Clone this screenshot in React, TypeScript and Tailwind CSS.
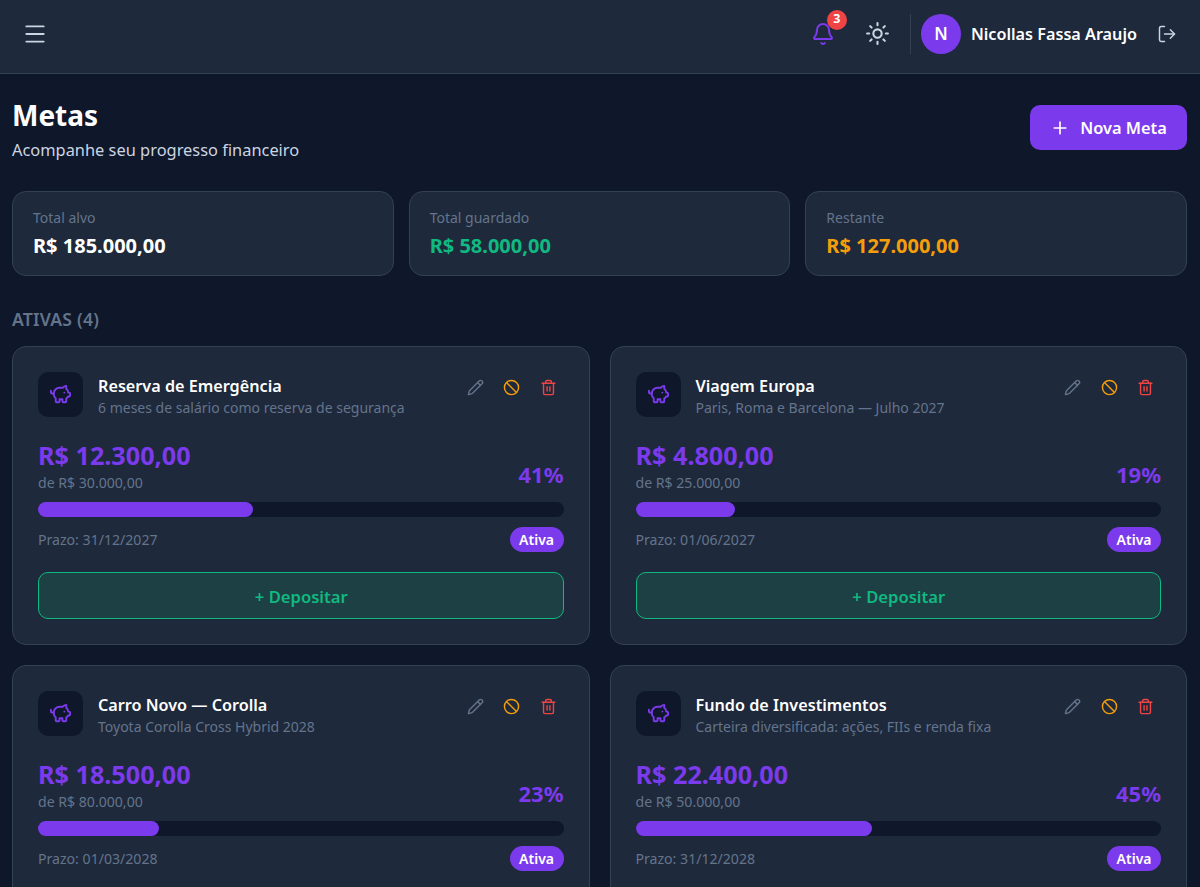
import { Menu, Bell, Sun, LogOut, Plus, Pencil, Ban, Trash2, PiggyBank } from 'lucide-react';

const goals = [
  { name: 'Reserva de Emergência', desc: '6 meses de salário como reserva de segurança', saved: 'R$ 12.300,00', target: 'de R$ 30.000,00', pct: 41, due: '31/12/2027' },
  { name: 'Viagem Europa', desc: 'Paris, Roma e Barcelona — Julho 2027', saved: 'R$ 4.800,00', target: 'de R$ 25.000,00', pct: 19, due: '01/06/2027' },
  { name: 'Carro Novo — Corolla', desc: 'Toyota Corolla Cross Hybrid 2028', saved: 'R$ 18.500,00', target: 'de R$ 80.000,00', pct: 23, due: '01/03/2028' },
  { name: 'Fundo de Investimentos', desc: 'Carteira diversificada: ações, FIIs e renda fixa', saved: 'R$ 22.400,00', target: 'de R$ 50.000,00', pct: 45, due: '31/12/2028' },
];

function GoalCard({ goal }: { goal: (typeof goals)[number] }) {
  return (
    <div className="rounded-[14px] border border-[#334155] bg-[#1e293b] p-[25px]">
      <div className="flex items-start justify-between">
        <div className="flex gap-[15px]">
          <div className="flex h-[45px] w-[45px] items-center justify-center rounded-[10px] bg-[#0f172a]">
            <PiggyBank className="h-[23px] w-[23px] text-[#7c3aed]" strokeWidth={2} />
          </div>
          <div>
            <div className="mt-[2px] text-[16.2px] leading-[24px] font-semibold text-white">{goal.name}</div>
            <div className="text-[14px] leading-[20px] text-[#64748b]">{goal.desc}</div>
          </div>
        </div>
        <div className="mr-[7px] flex items-center gap-[19.5px] pt-[7px]">
          <Pencil className="h-[17px] w-[17px] text-[#64748b]" strokeWidth={2} />
          <Ban className="h-[17px] w-[17px] text-[#f59e0b]" strokeWidth={2} />
          <Trash2 className="h-[17px] w-[17px] text-[#ef4444]" strokeWidth={2} />
        </div>
      </div>
      <div className="mt-[21px] flex items-end justify-between">
        <div>
          <div className="text-[25.2px] leading-[32px] font-bold text-[#7c3aed]">{goal.saved}</div>
          <div className="mt-[2px] text-[14.1px] leading-[20px] text-[#64748b]">{goal.target}</div>
        </div>
        <div className="mb-[5px] text-[22px] leading-[28px] font-bold text-[#7c3aed]">{goal.pct}%</div>
      </div>
      <div className="mt-[9px] h-[15px] rounded-full bg-[#0f172a]">
        <div className="h-full rounded-full bg-[#7c3aed]" style={{ width: `${goal.pct}%` }} />
      </div>
      <div className="mt-[10px] flex items-center justify-between">
        <span className="text-[14.1px] text-[#64748b]">Prazo: {goal.due}</span>
        <span className="rounded-full bg-[#7c3aed] px-[9.5px] py-[3px] text-[14px] leading-[19px] font-semibold text-white">Ativa</span>
      </div>
      <button className="mt-[20px] h-[47px] w-full rounded-[10px] border border-[#10b981] bg-[#1d4044] pt-[3px] pl-[1px] text-[16.6px] font-semibold text-[#10b981]">
        + Depositar
      </button>
    </div>
  );
}

function Stat({ label, value, color }: { label: string; value: string; color: string }) {
  return (
    <div className="h-[85px] rounded-[14px] border border-[#334155] bg-[#1e293b] px-[20px] pt-[16px]">
      <div className="text-[14px] leading-[20px] text-[#64748b]">{label}</div>
      <div className={`mt-[4px] text-[20px] leading-[28px] font-bold ${color}`}>{value}</div>
    </div>
  );
}

export default function App() {
  return (
    <div className="h-[887px] overflow-hidden bg-[#0f172a] font-['Noto_Sans',sans-serif] text-white">
      <header className="flex h-[74px] items-center justify-between border-b border-[#334155] bg-[#1e293b] pr-[23px] pb-[6px] pl-[22px]">
        <Menu className="h-[26px] w-[26px] text-[#cbd5e1]" strokeWidth={1.75} />
        <div className="flex items-center">
          <div className="relative mr-[30px]">
            <Bell className="h-[24px] w-[24px] text-[#7c3aed]" strokeWidth={2} />
            <span className="absolute -top-[12px] left-[16px] flex h-5 w-5 items-center justify-center rounded-full bg-[#ef4444] text-[12.5px] font-bold text-white">3</span>
          </div>
          <Sun className="mr-[20px] h-[25px] w-[25px] text-[#cbd5e1]" strokeWidth={2} />
          <div className="mr-[10px] h-10 w-px bg-[#334155]" />
          <div className="flex h-10 w-10 items-center justify-center rounded-full bg-[#7c3aed] text-[17px] font-semibold">N</div>
          <span className="mt-[2px] ml-[10px] text-[16.2px] font-semibold">Nicollas Fassa Araujo</span>
          <LogOut className="ml-[20px] h-[20px] w-[20px] text-[#cbd5e1]" strokeWidth={1.75} />
        </div>
      </header>

      <main className="px-[12px]">
        <div className="mt-[23px] flex items-start justify-between pr-px">
          <div>
            <h1 className="text-[28px] leading-[36px] font-bold">Metas</h1>
            <p className="mt-[5px] text-[16.4px] leading-[24px] text-[#cbd5e1]">Acompanhe seu progresso financeiro</p>
          </div>
          <button className="mt-[8px] flex h-[45px] w-[157px] items-center justify-center gap-[10px] rounded-[10px] bg-[#7c3aed] pt-[2px] text-[16.4px] font-semibold">
            <Plus className="-mt-[2px] h-5 w-5" strokeWidth={2} />
            Nova Meta
          </button>
        </div>

        <div className="mt-[29px] grid grid-cols-3 gap-[15px] pr-px">
          <Stat label="Total alvo" value="R$ 185.000,00" color="text-white" />
          <Stat label="Total guardado" value="R$ 58.000,00" color="text-[#10b981]" />
          <Stat label="Restante" value="R$ 127.000,00" color="text-[#f59e0b]" />
        </div>

        <h2 className="mt-[31px] text-[17.6px] leading-[24px] font-semibold tracking-[0.2px] text-[#64748b]">ATIVAS (4)</h2>

        <div className="mt-[15px] grid grid-cols-2 gap-[20px] pr-px">
          {goals.map((goal) => (
            <GoalCard key={goal.name} goal={goal} />
          ))}
        </div>
      </main>
    </div>
  );
}
